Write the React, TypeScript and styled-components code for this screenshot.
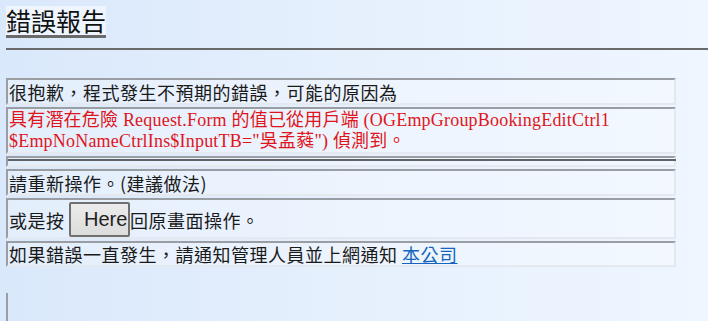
import styled, { createGlobalStyle } from "styled-components";

const GlobalStyle = createGlobalStyle`
  html, body {
    margin: 0;
    padding: 0;
  }
  body {
    min-height: 321px;
    background: linear-gradient(to right, #d9e8fb 0%, #e6f0fd 50%, #eef6ff 100%);
    font-family: "Noto Sans CJK TC", "Liberation Sans", sans-serif;
    color: #111;
    overflow: hidden;
  }
`;

const Page = styled.div`
  padding: 6px 0 0 6px;
`;

const Title = styled.h1`
  display: inline-block;
  margin: 0;
  padding: 0;
  font-size: 25px;
  font-weight: normal;
  line-height: 29px;
  background: #eef5fe;
  border-bottom: 3px solid #6a6a6a;
`;

const Rule = styled.hr`
  margin: 10px 0 0 0;
  border: none;
  height: 2px;
  background: #6a6a6a;
`;

const Table = styled.div`
  width: 670px;
  margin-top: 28px;
  display: flex;
  flex-direction: column;
  gap: 2px;
`;

const Cell = styled.div<{ $red?: boolean; $pad?: string }>`
  border-top: 2px solid #9a9da2;
  border-left: 2px solid #9a9da2;
  border-right: 2px solid #e4e9ef;
  border-bottom: 2px solid #e4e9ef;
  background: rgba(255, 255, 255, 0.28);
  padding: ${(p) => p.$pad ?? "1px 1px 0"};
  font-size: 18px;
  line-height: ${(p) => (p.$red ? "21px" : "22px")};
  letter-spacing: ${(p) => (p.$red ? "0.2px" : "0.5px")};
  white-space: nowrap;
  color: ${(p) => (p.$red ? "#e0151b" : "#1a1a1a")};
  font-family: ${(p) =>
    p.$red
      ? `"Liberation Serif", "Noto Sans CJK TC", serif`
      : `"Noto Sans CJK TC", "Liberation Sans", sans-serif`};
`;

const DoubleLine = styled.div`
  height: 4px;
  margin-top: 1px;
  border-top: 2px solid #5f6266;
  margin-right: -2px;
`;

const ButtonLine = styled.div`
  display: flex;
  align-items: center;
  white-space: pre;
`;

const HereButton = styled.button`
  width: 61px;
  height: 35px;
  margin: 0;
  padding: 0 0 0 13px;
  font-family: "Liberation Sans", Arial, sans-serif;
  font-size: 20px;
  color: #222;
  text-align: left;
  white-space: nowrap;
  overflow: hidden;
  background: linear-gradient(#ececec, #dcdcdc);
  border: 2px solid #707070;
  border-radius: 2px;
`;

const Link = styled.a`
  color: #1565c0;
  text-decoration: underline;
`;

const BottomTable = styled.div`
  margin-top: 26px;
  height: 40px;
  border-left: 2px solid #9a9da2;
`;

export default function App() {
  return (
    <>
      <GlobalStyle />
      <Page>
        <Title>錯誤報告</Title>
        <Rule />
        <Table>
          <Cell>很抱歉，程式發生不預期的錯誤，可能的原因為</Cell>
          <Cell $red $pad="1px 1px 0">
            具有潛在危險 Request.Form 的值已從用戶端 (OGEmpGroupBookingEditCtrl1
            <br />
            $EmpNoNameCtrlIns$InputTB="吳孟蕤") 偵測到。
          </Cell>
          <Cell $pad="0">
            <DoubleLine />
          </Cell>
          <Cell>請重新操作。(建議做法)</Cell>
          <Cell $pad="2px 1px 0">
            <ButtonLine>
              {"或是按 "}
              <HereButton>Here</HereButton>回原畫面操作。
            </ButtonLine>
          </Cell>
          <Cell $pad="0 1px">
            如果錯誤一直發生，請通知管理人員並上網通知 <Link href="#">本公司</Link>
          </Cell>
        </Table>
        <BottomTable />
      </Page>
    </>
  );
}
